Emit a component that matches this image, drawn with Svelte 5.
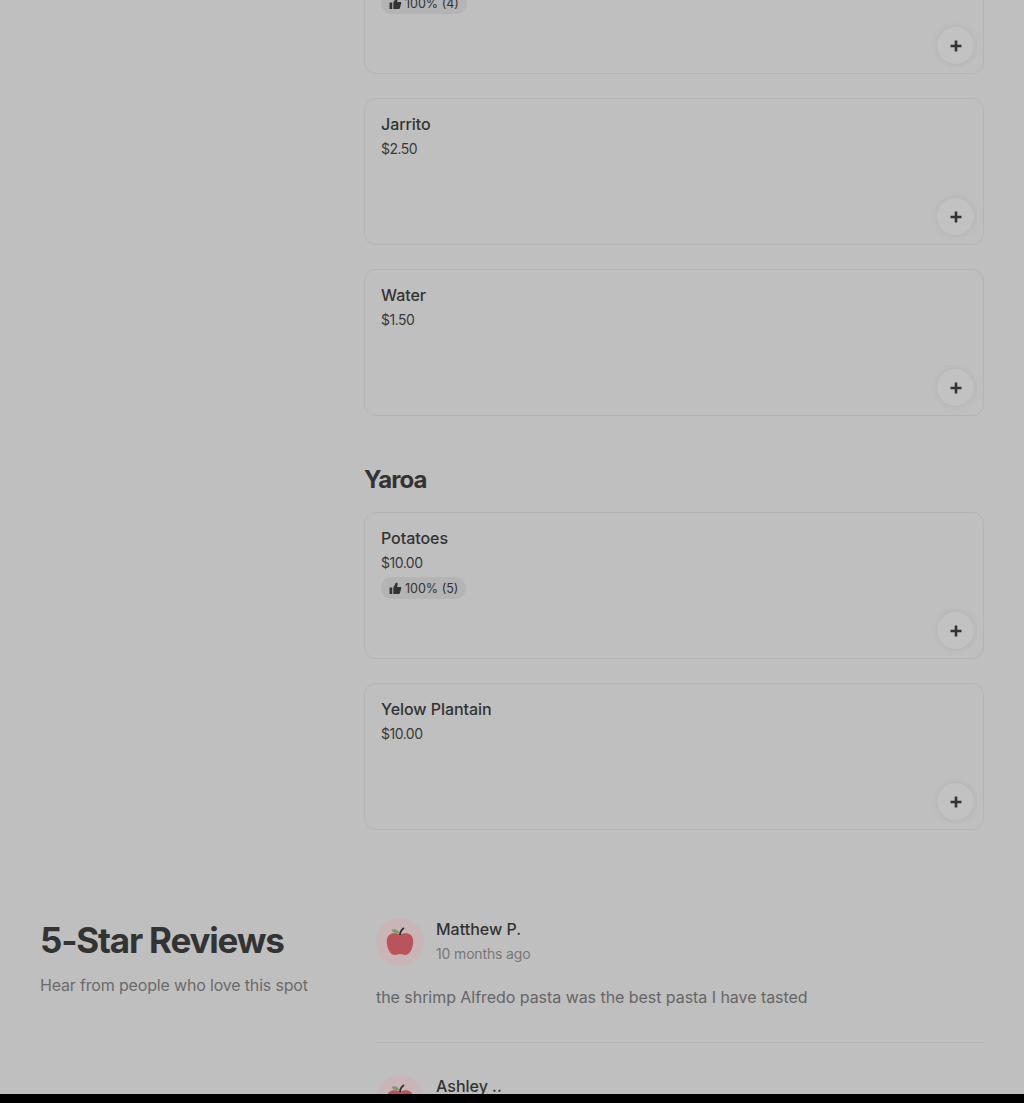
<script>
  const sections = [
    { items: [{ name: 'Horchata', price: '$3.50', rating: '100% (4)' }, { name: 'Jarrito', price: '$2.50' }, { name: 'Water', price: '$1.50' }] },
    { title: 'Yaroa', items: [{ name: 'Potatoes', price: '$10.00', rating: '100% (5)' }, { name: 'Yelow Plantain', price: '$10.00' }] }
  ];
  const reviews = [
    { name: 'Matthew P.', when: '10 months ago', text: 'the shrimp Alfredo pasta was the best pasta I have tasted' },
    { name: 'Ashley ..', when: '10 months ago', text: 'Great food and fast delivery' }
  ];
</script>

<div class="viewport">
  <div class="page">
    <section class="menu">
      {#each sections as s}
        {#if s.title}<h2>{s.title}</h2>{/if}
        <div class="list">
          {#each s.items as item}
            <article class="card">
              <h3>{item.name}</h3>
              <p class="price">{item.price}</p>
              {#if item.rating}
                <span class="badge">
                  <svg viewBox="0 0 24 24" width="13" height="13"><path fill="currentColor" d="M1 10h5v12H1zM8 22V10l5-9 1.500.6c1.200.5 1.800 1.800 1.500 3L15 9h6c1.200 0 2 1.100 1.700 2.300l-2.500 9c-.3 1-1.200 1.700-2.200 1.700z"/></svg>
                  {item.rating}
                </span>
              {/if}
              <button class="add" aria-label="Add">
                <svg viewBox="0 0 12 12" width="12" height="12"><path d="M6 .5v11M.5 6h11" stroke="currentColor" stroke-width="2.600" fill="none"/></svg>
              </button>
            </article>
          {/each}
        </div>
      {/each}
    </section>

    <section class="reviews">
      <div class="intro">
        <h2 class="big">5-Star Reviews</h2>
        <p>Hear from people who love this spot</p>
      </div>
      <div class="rlist">
        {#each reviews as r}
          <div class="review">
            <div class="who">
              <div class="avatar">
                <svg viewBox="0 0 48 48" width="48" height="48">
                  <path fill="#b9545a" d="M24 17c3-2.200 8-2.600 10.800 0 3 2.800 3 8 1.300 13-1.300 4-3.800 7-6.600 7-2 0-3-1-5.500-1s-3.500 1-5.500 1c-2.800 0-5.300-3-6.600-7-1.700-5-1.700-10.200 1.300-13 2.800-2.600 7.800-2.200 10.800 0z"/>
                  <path fill="#7f9a6c" d="M15.500 12c3-1.500 6.500-.5 8 3-3 1-6.500 0-8-3z"/>
                  <path stroke="#2f2f2f" stroke-width="1.800" fill="none" d="M24 17c.2-3 1.500-5.500 4-7"/>
                </svg>
              </div>
              <div>
                <div class="name">{r.name}</div>
                <div class="when">{r.when}</div>
              </div>
            </div>
            <p class="text">{r.text}</p>
          </div>
        {/each}
      </div>
    </section>
  </div>
</div>

<style>
  :global(body) { background: #000; }
  .viewport { height: 1094px; overflow: hidden; background: #bfbfbf; font-family: Inter, "Liberation Sans", sans-serif; color: #333; }
  .page { margin-top: -73px; padding: 0 40px; }
  .menu { margin-left: 324px; }
  .list { display: flex; flex-direction: column; gap: 24px; }
  .menu h2 { margin: 48px 0 16px; font-size: 24px; line-height: 32px; font-weight: 700; letter-spacing: -0.9px; color: #333; }
  .card { position: relative; box-sizing: border-box; height: 147px; padding: 15px 16px; border: 1px solid #b4b4b4; border-radius: 12px; display: flex; flex-direction: column; align-items: flex-start; }
  h3 { margin: 0; font-size: 16px; line-height: 20px; font-weight: 500; color: #333; letter-spacing: -0.05px; }
  .price { margin: 5px 0 0; font-size: 14px; line-height: 20px; color: #3a3a3a; letter-spacing: -0.5px; }
  .badge { margin-top: 4px; height: 22px; padding: 0 8px; border-radius: 11px; background: #b4b4b4; display: inline-flex; align-items: center; gap: 3px; font-size: 12.500px; color: #333; }
  .add { position: absolute; right: 9px; bottom: 9px; width: 37px; height: 37px; padding: 0; border: 0; border-radius: 50%; background: #c2c2c2; color: #333; box-shadow: 0 0 6px rgba(0,0,0,.08); display: flex; align-items: center; justify-content: center; }
  .reviews { display: grid; grid-template-columns: 336px 1fr; margin-top: 88px; }
  .big { margin: 2px 0 0; font-size: 35px; line-height: 40px; font-weight: 700; letter-spacing: -1.2px; color: #333; }
  .intro p { margin: 15px 0 0; font-size: 16px; line-height: 20px; color: #6b6b6b; letter-spacing: -0.17px; }
  .review { height: 125px; margin-bottom: 32px; box-sizing: border-box; border-bottom: 1px solid #b4b4b4; }
  .review + .review { border-bottom: 0; }
  .who { display: flex; gap: 12px; }
  .avatar { width: 48px; height: 48px; border-radius: 50%; background: #c9b5b7; }
  .name { margin-top: 1px; font-size: 16px; line-height: 20px; font-weight: 500; color: #333; }
  .when { margin-top: 5px; font-size: 14px; line-height: 20px; color: #777; letter-spacing: -0.15px; }
  .text { margin: 21px 0 0; font-size: 16px; line-height: 20px; color: #666; letter-spacing: -0.05px; }
</style>
